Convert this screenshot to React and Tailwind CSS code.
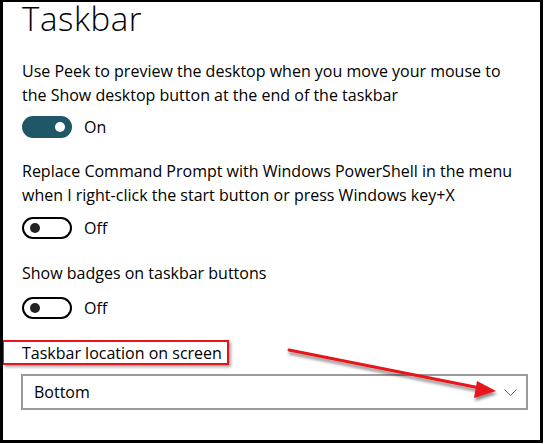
import React from "react";

const font = { fontFamily: '"Open Sans", "Noto Sans", sans-serif' };

function Toggle({ on, label }) {
  return (
    <div className="flex items-center h-[22px]">
      {on ? (
        <div className="w-[50px] h-[22px] rounded-full bg-[#1f5668] flex items-center justify-end pr-[7px]">
          <div className="w-[10px] h-[10px] rounded-full bg-white" />
        </div>
      ) : (
        <div className="w-[50px] h-[22px] rounded-full border-2 border-black flex items-center pl-[6px]">
          <div className="w-[10px] h-[10px] rounded-full bg-[#222]" />
        </div>
      )}
      <span className="ml-[12px] text-[16px] text-black">{label}</span>
    </div>
  );
}

export default function App() {
  return (
    <div className="w-[544px] h-[444px] bg-white" style={font}>
      <div className="relative w-[543px] h-[443px] bg-white border-l-[3px] border-t-2 border-r-[3px] border-b-[3px] border-black pl-[19px] pr-[8px] overflow-hidden">
        <div className="text-[33px] font-light leading-[34px] text-black tracking-[0.6px]">Taskbar</div>

        <div className="mt-[23px] text-[16px] leading-[24px] text-black">
          Use Peek to preview the desktop when you move your mouse to
          <br />
          the Show desktop button at the end of the taskbar
        </div>
        <div className="mt-[9px]">
          <Toggle on label="On" />
        </div>

        <div className="mt-[21px] text-[16px] leading-[24px] text-black">
          Replace Command Prompt with Windows PowerShell in the menu
          <br />
          when I right-click the start button or press Windows key+X
        </div>
        <div className="mt-[10px]">
          <Toggle label="Off" />
        </div>

        <div className="mt-[22px] text-[16px] leading-[24px] text-black">
          Show badges on taskbar buttons
        </div>
        <div className="mt-[12px]">
          <Toggle label="Off" />
        </div>

        <div className="mt-[21px] -ml-[20px] w-[227px] h-[25px] border-2 border-[#e8141a] shadow-[2px_2px_3px_rgba(0,0,0,0.35)] pl-[18px] flex items-center text-[16px] text-black">
          Taskbar location on screen
        </div>

        <div className="mt-[9px] -ml-[1px] w-[507px] h-[36px] border-2 border-[#9a9a9a] flex items-center justify-between pl-[11px] pr-[9px] text-[16px] text-black">
          <span>Bottom</span>
          <svg width="13" height="7" viewBox="0 0 13 7" fill="none">
            <path d="M0.5 0.5 L6.5 6.5 L12.5 0.5" stroke="#666" strokeWidth="1" />
          </svg>
        </div>

        <svg className="absolute left-0 top-0 pointer-events-none" width="544" height="444" viewBox="0 0 544 444">
          <defs>
            <filter id="sh" x="-10%" y="-50%" width="120%" height="200%">
              <feDropShadow dx="1" dy="3" stdDeviation="1.6" floodColor="#000" floodOpacity="0.45" />
            </filter>
          </defs>
          <g filter="url(#sh)" transform="translate(-3,-2)">
            <line x1="289" y1="350" x2="480" y2="388" stroke="#e8141a" strokeWidth="3" strokeLinecap="round" />
            <polygon points="477,381 496,391 474,398" fill="#e8141a" />
          </g>
        </svg>
      </div>
    </div>
  );
}
